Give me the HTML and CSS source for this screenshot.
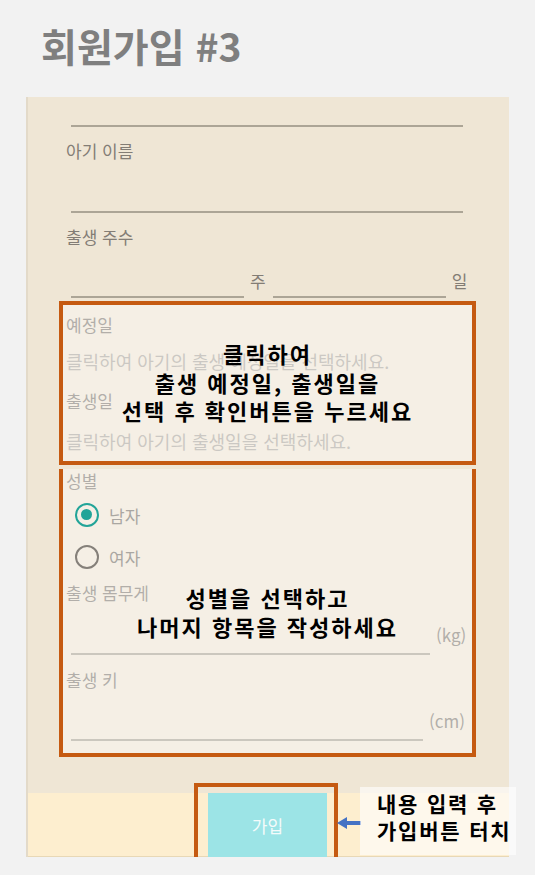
FILE: index.html
```html
<!DOCTYPE html>
<html lang="ko">
<head>
	<meta charset="utf-8">
	<title>회원가입 #3</title>
	<link rel="stylesheet" href="styles.css">
</head>
<body>
	<div class="header">
		<h1 class="title">회원가입 #3</h1>
	</div>

	<div class="phone">
		<div class="form">
			<div class="line top-line"></div>
			<div class="label first">아기 이름</div>
			<div class="line name-line"></div>
			<div class="label first">출생 주수</div>
			<div class="week-row">
				<div class="line short"></div>
				<span class="unit">주</span>
				<div class="line short"></div>
				<span class="unit">일</span>
			</div>

			<div class="mark date-box">
				<div class="box-label l1">예정일</div>
				<div class="hint h1">클릭하여 아기의 출생 예정일을 선택하세요.</div>
				<div class="box-label l2">출생일</div>
				<div class="hint h2">클릭하여 아기의 출생일을 선택하세요.</div>
				<div class="note date-note">클릭하여<br>출생 예정일, 출생일을<br>선택 후 확인버튼을 누르세요</div>
			</div>

			<div class="mark info-box">
				<div class="box-label g1">성별</div>
				<div class="radio r1"><span class="dot checked"></span><span>남자</span></div>
				<div class="radio r2"><span class="dot"></span><span>여자</span></div>
				<div class="box-label g2">출생 몸무게</div>
				<div class="unit-row kg-row">
					<div class="line kg-line"></div>
					<span class="unit">(kg)</span>
				</div>
				<div class="box-label g3">출생 키</div>
				<div class="unit-row cm-row">
					<div class="line cm-line"></div>
					<span class="unit">(cm)</span>
				</div>
				<div class="note info-note">성별을 선택하고<br>나머지 항목을 작성하세요</div>
			</div>
		</div>

		<div class="bottom-bar">
			<div class="join-btn">가입</div>
			<div class="btn-mark"></div>
			<svg class="arrow" width="24" height="14" viewBox="0 0 24 14">
				<polygon points="0,7 10,1 10,5 24,5 24,9 10,9 10,13" fill="#4472c4"/>
			</svg>
			<div class="callout">내용 입력 후<br>가입버튼 터치</div>
		</div>
	</div>
</body>
</html>
```

FILE: styles.css
```css
body {
	margin: 0;
	background-color: #f2f2f2;
	font-family: "Noto Sans CJK KR", "Noto Sans", sans-serif;
}

.header {
	height: 97px;
	box-sizing: border-box;
	padding: 22px 0 0 41px;
}

.title {
	margin: 0;
	font-size: 39px;
	line-height: 46px;
	font-weight: bold;
	color: #7f7f7f;
	letter-spacing: 0;
}

.phone {
	margin-left: 26px;
	width: 483px;
	height: 760px;
	box-sizing: border-box;
	background-color: #efe6d5;
	border-left: 2px solid #e3dac9;
	display: flex;
	flex-direction: column;
}

.form {
	flex: 1;
}

.line {
	height: 2px;
	background-color: #aca596;
}

.top-line {
	margin: 28px 0 0 43px;
	width: 392px;
}

.name-line {
	margin: 48px 0 0 43px;
	width: 392px;
}

.label {
	margin: 12px 0 0 38px;
	font-size: 17px;
	line-height: 24px;
	color: #837d75;
}

.week-row {
	display: flex;
	align-items: flex-end;
	height: 49px;
	margin-left: 43px;
}

.week-row .short {
	width: 173px;
}

.unit {
	font-size: 17px;
	line-height: 24px;
	color: #837d75;
	margin: 0 7px 5px 6px;
}

.mark {
	position: relative;
	margin-left: 31px;
	width: 417px;
	box-sizing: border-box;
	border: 4px solid #c55a11;
}

.mark::before {
	content: "";
	position: absolute;
	top: 0;
	left: 0;
	right: 0;
	bottom: 0;
	background-color: rgba(255, 255, 255, 0.38);
}

.date-box {
	margin-top: 3px;
	height: 164px;
}

.info-box {
	border-top: 0;
	height: 288px;
}

.box-label {
	margin-left: 3px;
	font-size: 17px;
	line-height: 24px;
	color: #837d75;
}

.hint {
	margin-left: 3px;
	font-size: 18px;
	line-height: 26px;
	color: #aca69e;
}

.l1 { margin-top: 8px; }
.h1 { margin-top: 11px; }
.l2 { margin-top: 15px; }
.h2 { margin-top: 15px; }

.g1 { margin-top: 4px; }
.g2 { margin-top: 7px; }
.g3 { margin-top: 13px; }

.radio {
	display: flex;
	align-items: center;
	height: 34px;
	margin-left: 12px;
	font-size: 17px;
	color: #76716a;
}

.r1 { margin-top: 5px; }
.r2 { margin-top: 8px; }

.dot {
	width: 24px;
	height: 24px;
	box-sizing: border-box;
	border: 2.5px solid #85807a;
	border-radius: 50%;
	margin-right: 10px;
	position: relative;
}

.dot.checked {
	border-color: #22a498;
}

.dot.checked::after {
	content: "";
	position: absolute;
	top: 4px;
	left: 4px;
	width: 11px;
	height: 11px;
	border-radius: 50%;
	background-color: #22a498;
}

.unit-row {
	display: flex;
	align-items: flex-end;
	margin-left: 8px;
}

.unit-row .unit {
	margin: 0 0 8px 6px;
}

.kg-row { height: 50px; }
.cm-row { height: 49px; }

.kg-line { width: 359px; }
.cm-line { width: 352px; }

.note {
	position: absolute;
	left: 0;
	right: 0;
	text-align: center;
	font-size: 22px;
	line-height: 28.5px;
	font-weight: bold;
	letter-spacing: 2px;
	color: #000;
}

.date-note { top: 34px; }
.info-note { top: 114px; }

.bottom-bar {
	position: relative;
	height: 64px;
	background-color: #fdeecf;
	border-bottom: 1px solid #e8d8b6;
	box-sizing: border-box;
}

.join-btn {
	margin-left: 180px;
	width: 119px;
	height: 64px;
	background-color: #9ce4e6;
	color: #f4fbfb;
	font-size: 17px;
	display: flex;
	align-items: center;
	justify-content: center;
}

.btn-mark {
	position: absolute;
	top: -10px;
	left: 166px;
	width: 144px;
	height: 79px;
	box-sizing: border-box;
	border: 4px solid #c55a11;
}

.arrow {
	position: absolute;
	left: 309px;
	top: 23px;
}

.callout {
	position: absolute;
	left: 332px;
	top: -6px;
	width: 156px;
	height: 68px;
	box-sizing: border-box;
	padding: 3px 0 0 17px;
	background-color: rgba(255, 255, 255, 0.6);
	font-size: 21px;
	line-height: 27px;
	font-weight: bold;
	letter-spacing: 1.8px;
	color: #000;
	white-space: nowrap;
}
```
